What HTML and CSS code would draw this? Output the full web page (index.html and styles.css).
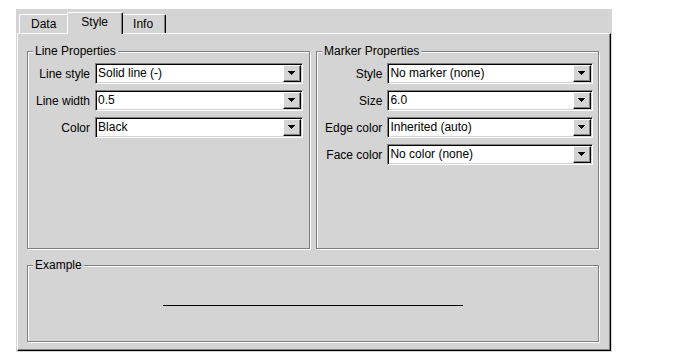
FILE: index.html
```html
<!DOCTYPE html>
<html lang="en">
<head>
  <meta charset="UTF-8" />
  <title>Line Style</title>
  <link rel="stylesheet" href="styles.css">
</head>
<body>

<svg class="defs" width="0" height="0">
  <symbol id="arrow" viewBox="0 0 7 4">
    <rect x="0" y="0" width="7" height="1" />
    <rect x="1" y="1" width="5" height="1" />
    <rect x="2" y="2" width="3" height="1" />
    <rect x="3" y="3" width="1" height="1" />
  </symbol>
</svg>

<div class="frame">
  <div class="tabs">
    <div class="tab">Data</div>
    <div class="tab selected">Style</div>
    <div class="tab">Info</div>
  </div>

  <div class="panel">
    <div class="groups">
      <fieldset class="group">
        <legend>Line Properties</legend>
        <div class="form line-form">
          <label>Line style</label>
          <div class="combo"><span>Solid line (-)</span><i class="drop"><svg width="7" height="4"><use href="#arrow"/></svg></i></div>
          <label>Line width</label>
          <div class="combo"><span>0.5</span><i class="drop"><svg width="7" height="4"><use href="#arrow"/></svg></i></div>
          <label>Color</label>
          <div class="combo"><span>Black</span><i class="drop"><svg width="7" height="4"><use href="#arrow"/></svg></i></div>
        </div>
      </fieldset>

      <fieldset class="group">
        <legend>Marker Properties</legend>
        <div class="form marker-form">
          <label>Style</label>
          <div class="combo"><span>No marker (none)</span><i class="drop"><svg width="7" height="4"><use href="#arrow"/></svg></i></div>
          <label>Size</label>
          <div class="combo"><span>6.0</span><i class="drop"><svg width="7" height="4"><use href="#arrow"/></svg></i></div>
          <label>Edge color</label>
          <div class="combo"><span>Inherited (auto)</span><i class="drop"><svg width="7" height="4"><use href="#arrow"/></svg></i></div>
          <label>Face color</label>
          <div class="combo"><span>No color (none)</span><i class="drop"><svg width="7" height="4"><use href="#arrow"/></svg></i></div>
        </div>
      </fieldset>
    </div>

    <fieldset class="group example">
      <legend>Example</legend>
      <div class="preview"><div class="sample-line"></div></div>
    </fieldset>
  </div>
</div>

</body>
</html>
```

FILE: styles.css
```css
body { margin: 0; background: #fff; font-family: "Liberation Sans", Arial, sans-serif; font-size: 12px; color: #000; }
.defs { position: absolute; }

.frame { margin: 9px 0 0 16px; width: 596px; background: #d4d4d4; padding-bottom: 1px; }

.tabs { display: flex; align-items: flex-end; height: 24px; padding-left: 3px; }
.tab { box-sizing: border-box; height: 19px; line-height: 18px; padding: 0 12px 0 11px;
       border-top: 1px solid #fff; border-left: 1px solid #fff; border-right: 1px solid #000;
       border-radius: 2px 2px 0 0; box-shadow: inset -1px 0 0 #808080; background: #d4d4d4; }
.tab.selected { position: relative; z-index: 1; height: 22px; margin: 0 -2px -1px; padding: 0 14px 0 13px; line-height: 18px; }

.panel { margin-left: 1px; width: 594px; height: 318px; box-sizing: border-box; padding: 10px 11px 8px 9px;
         border-top: 1px solid #fff; border-left: 1px solid #fff; border-right: 1px solid #000; border-bottom: 1px solid #000;
         box-shadow: inset -1px -1px 0 #808080; }

.groups { display: flex; gap: 6px; margin-bottom: 9px; }
.group { margin: 0; padding: 0; min-width: 0; box-sizing: border-box; border: 1px solid #808080;
         box-shadow: 1px 1px 0 #fff, inset 1px 1px 0 #fff; }
.groups .group { width: 283px; height: 205px; }
.group legend { margin-left: 5px; padding: 0 2px; line-height: 14px; background: #d4d4d4; }

.form { display: grid; grid-template-columns: auto 1fr; column-gap: 5px; row-gap: 6px; align-items: center; padding-top: 5px; }
.line-form { padding-left: 8px; padding-right: 6px; }
.marker-form { padding-left: 8px; padding-right: 5px; }
.form label { text-align: right; white-space: nowrap; }

.combo { display: flex; align-items: center; height: 21px; box-sizing: border-box; background: #fff;
         border-top: 1px solid #808080; border-left: 1px solid #808080; border-bottom: 1px solid #fff; border-right: 1px solid #fff;
         box-shadow: inset 1px 1px 0 #000, inset -1px -1px 0 #d4d4d4; padding: 1px; }
.combo span { flex: 1; padding-left: 1px; line-height: 17px; white-space: nowrap; overflow: hidden; }
.drop { display: flex; align-items: center; justify-content: center; width: 18px; height: 17px; box-sizing: border-box;
        background: #d4d4d4; border-top: 1px solid #fff; border-left: 1px solid #fff; border-right: 1px solid #000; border-bottom: 1px solid #000;
        box-shadow: inset -1px -1px 0 #808080; }
.drop svg { display: block; fill: #000; margin: 0 1px 1px 0; }

.example { width: 572px; height: 84px; }
.preview { display: flex; align-items: center; justify-content: center; height: 67px; }
.sample-line { width: 300px; height: 1px; background: #000; }
```
